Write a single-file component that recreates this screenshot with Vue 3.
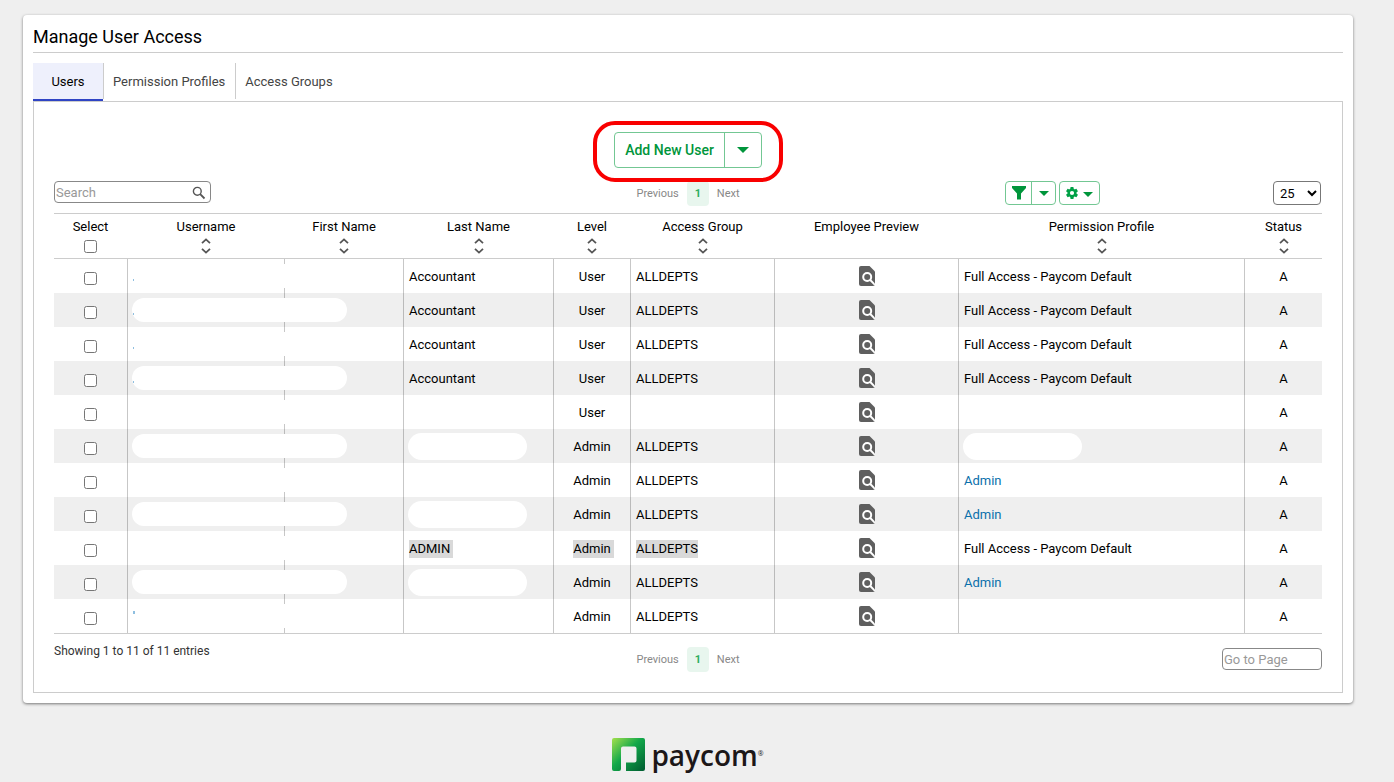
<script setup>
import { ref } from 'vue'

const search = ref('')
const goTo = ref('')
const pageSize = ref('25')

const tabs = [
  { label: 'Users', active: true },
  { label: 'Permission Profiles' },
  { label: 'Access Groups' },
]

const columns = [
  { label: 'Username', sortable: true },
  { label: 'First Name', sortable: true },
  { label: 'Last Name', sortable: true },
  { label: 'Level', sortable: true },
  { label: 'Access Group', sortable: true },
  { label: 'Employee Preview', sortable: false },
  { label: 'Permission Profile', sortable: true },
  { label: 'Status', sortable: true },
]

const full = 'Full Access - Paycom Default'
const rows = [
  { last: 'Accountant', level: 'User', group: 'ALLDEPTS', profile: full, speck: 'dot' },
  { last: 'Accountant', level: 'User', group: 'ALLDEPTS', profile: full, speck: 'dot' },
  { last: 'Accountant', level: 'User', group: 'ALLDEPTS', profile: full, speck: 'dot' },
  { last: 'Accountant', level: 'User', group: 'ALLDEPTS', profile: full, speck: 'dot' },
  { last: '', level: 'User', group: '', profile: '' },
  { last: '', level: 'Admin', group: 'ALLDEPTS', profile: '' },
  { last: '', level: 'Admin', group: 'ALLDEPTS', profile: 'Admin', link: true },
  { last: '', level: 'Admin', group: 'ALLDEPTS', profile: 'Admin', link: true },
  { last: 'ADMIN', level: 'Admin', group: 'ALLDEPTS', profile: full, marked: true },
  { last: '', level: 'Admin', group: 'ALLDEPTS', profile: 'Admin', link: true },
  { last: '', level: 'Admin', group: 'ALLDEPTS', profile: '', speck: 'tick' },
]
</script>

<template>
  <div class="page">
    <main class="card">
      <h1 class="title">Manage User Access</h1>

      <nav class="tabs">
        <button v-for="t in tabs" :key="t.label" type="button" class="tab" :class="{ active: t.active }">
          {{ t.label }}
        </button>
      </nav>

      <section class="panel">
        <div class="add">
          <div class="add-group">
            <button type="button" class="add-main">Add New User</button>
            <button type="button" class="add-more" aria-label="More add options">
              <svg width="12" height="6" viewBox="0 0 12 6"><path d="M0 0h12L6 6z" fill="#00953b" /></svg>
            </button>
            <span class="ring"></span>
          </div>
        </div>

        <div class="bar">
          <div class="search">
            <input v-model="search" type="text" placeholder="Search" aria-label="Search" />
            <svg width="14" height="14" viewBox="0 0 14 14" fill="none" stroke="#555">
              <circle cx="5.3" cy="5.3" r="3.9" stroke-width="1.4" />
              <path d="M8.2 8.2l4.3 4.3" stroke-width="1.8" />
            </svg>
          </div>
          <div class="pager">
            <button type="button">Previous</button>
            <button type="button" class="current">1</button>
            <button type="button">Next</button>
          </div>
          <div class="tools">
            <div class="tool-buttons">
              <div class="split">
                <button type="button" class="filter" aria-label="Filter">
                  <svg width="14" height="14" viewBox="0 0 14 14"><path d="M0 0h14v2L9 7.500V13.500H5V7.500L0 2z" fill="#00953b" /></svg>
                </button>
                <button type="button" class="filter-more" aria-label="Filter options">
                  <svg width="10" height="5" viewBox="0 0 10 5"><path d="M0 0h10L5 5z" fill="#00953b" /></svg>
                </button>
              </div>
              <button type="button" class="gear" aria-label="Settings">
                <svg width="12" height="12" viewBox="2 2 20 20"><path fill="#00a046" fill-rule="evenodd" d="M19.400 13a7.500 7.500 0 0 0 0-2l2.100-1.650a.5.5 0 0 0 .12-.64l-2-3.460a.5.5 0 0 0-.61-.22l-2.490 1a7.300 7.300 0 0 0-1.690-.98l-.38-2.650A.5.5 0 0 0 14 2h-4a.5.5 0 0 0-.49.42l-.38 2.650c-.61.25-1.170.59-1.690.98l-2.490-1a.5.5 0 0 0-.61.22l-2 3.460a.5.5 0 0 0 .12.64L4.570 11a7.900 7.900 0 0 0 0 2l-2.110 1.650a.5.5 0 0 0-.12.64l2 3.460c.12.22.39.3.61.22l2.490-1c.52.4 1.080.73 1.690.98l.38 2.650c.03.24.24.4.49.4h4c.25 0 .46-.18.49-.42l.38-2.650c.61-.25 1.170-.59 1.690-.98l2.490 1c.23.09.49 0 .61-.22l2-3.460a.5.5 0 0 0-.12-.64zM12 15.500a3.500 3.500 0 1 1 0-7 3.500 3.500 0 0 1 0 7z" /></svg>
                <svg class="low" width="10" height="5" viewBox="0 0 10 5"><path d="M0 0h10L5 5z" fill="#00953b" /></svg>
              </button>
            </div>
            <select v-model="pageSize" aria-label="Rows per page">
              <option>25</option>
              <option>50</option>
              <option>100</option>
            </select>
          </div>
        </div>

        <table>
          <colgroup>
            <col class="c-select" />
            <col class="c-username" />
            <col class="c-first" />
            <col class="c-last" />
            <col class="c-level" />
            <col class="c-group" />
            <col class="c-preview" />
            <col class="c-profile" />
            <col class="c-status" />
          </colgroup>
          <thead>
            <tr>
              <th scope="col">
                <div class="head">
                  <label for="all">Select</label>
                  <input id="all" type="checkbox" />
                </div>
              </th>
              <th v-for="c in columns" :key="c.label" scope="col">
                <div class="head">
                  <span>{{ c.label }}</span>
                  <svg v-if="c.sortable" width="10" height="16" viewBox="0 0 10 16" fill="none" stroke="#555" stroke-width="1.800">
                    <path d="M1 5.200L5 1.400l4 3.800M1 10.800l4 3.800 4-3.800" />
                  </svg>
                </div>
              </th>
            </tr>
          </thead>
          <tbody>
            <tr v-for="(r, i) in rows" :key="i">
              <td class="mid"><input type="checkbox" class="pick" :aria-label="'Select row ' + (i + 1)" /></td>
              <td><span class="mask wide" :class="r.speck"></span></td>
              <td></td>
              <td>
                <span v-if="r.last" :class="{ marked: r.marked, trail: r.marked }">{{ r.last }}</span>
                <span v-else class="mask"></span>
              </td>
              <td class="mid"><span :class="{ marked: r.marked, trail: r.marked }">{{ r.level }}</span></td>
              <td><span :class="{ marked: r.marked }">{{ r.group }}</span></td>
              <td class="mid">
                <button type="button" class="preview" aria-label="Preview employee">
                  <svg width="16" height="20" viewBox="0 0 16 20">
                    <path d="M2 0h8.500L16 5.500V18a2 2 0 0 1-2 2H2a2 2 0 0 1-2-2V2a2 2 0 0 1 2-2z" fill="#5f5f5f" />
                    <circle cx="8.200" cy="11" r="4" fill="none" stroke="#fff" stroke-width="2" />
                    <path d="M11 13.800l5 5" stroke="#fff" stroke-width="2" />
                  </svg>
                </button>
              </td>
              <td>
                <a v-if="r.link" href="#">{{ r.profile }}</a>
                <span v-else-if="r.profile">{{ r.profile }}</span>
                <span v-else class="mask"></span>
              </td>
              <td class="mid">A</td>
            </tr>
          </tbody>
        </table>

        <div class="bar foot">
          <p class="info">Showing 1 to 11 of 11 entries</p>
          <div class="pager">
            <button type="button">Previous</button>
            <button type="button" class="current">1</button>
            <button type="button">Next</button>
          </div>
          <input v-model="goTo" class="goto" type="text" placeholder="Go to Page" aria-label="Go to Page" />
        </div>
      </section>
    </main>

    <footer class="brand">
      <svg width="33" height="33" viewBox="0 0 33 33">
        <defs>
          <linearGradient id="leaf" x1="0" y1="0" x2="1" y2="1">
            <stop offset="0" stop-color="#a4e04c" />
            <stop offset="0.450" stop-color="#12a84a" />
            <stop offset="1" stop-color="#005a30" />
          </linearGradient>
        </defs>
        <path fill="url(#leaf)" d="M2 0h29a2 2 0 0 1 2 2v29a2 2 0 0 1-2 2H14V24.500h8.500a2 2 0 0 0 2-2V10.500a2 2 0 0 0-2-2H11a2 2 0 0 0-2 2V31a2 2 0 0 1-2 2H2a2 2 0 0 1-2-2V2a2 2 0 0 1 2-2z" />
      </svg>
      <span class="word">paycom</span><span class="reg">®</span>
    </footer>
  </div>
</template>

<style>
body {
  background: #efefef;
}
</style>

<style scoped>
.page {
  padding: 15px 41px 0 23px;
  font: 13px/20px Roboto, "Liberation Sans", sans-serif;
  color: #000;
}
.page * {
  box-sizing: border-box;
}
button,
input,
select {
  font: inherit;
  color: inherit;
  margin: 0;
}
button {
  background: none;
  border: 0;
  padding: 0;
  display: flex;
  align-items: center;
  justify-content: center;
}
.card {
  background: #fff;
  border-radius: 4px;
  padding: 0 10px 10px;
  box-shadow: 0 1px 3px rgba(0, 0, 0, 0.5);
}
.title {
  margin: 0;
  height: 38px;
  padding-top: 11px;
  border-bottom: 1px solid #ccc;
  font-size: 18px;
  line-height: 22px;
  font-weight: 400;
}
.tabs {
  display: flex;
  margin-top: 10px;
  height: 38px;
}
.tab {
  height: 36px;
  padding: 2px 10px 0;
  font-size: 13px;
  color: #444;
}
.tab + .tab {
  padding-left: 9px;
  border-left: 1px solid #ccc;
}
.tab.active {
  height: 38px;
  width: 70px;
  background: #eef0fc;
  border-bottom: 2px solid #2f44c4;
  color: #000;
}
.panel {
  border: 1px solid #ccc;
  padding: 30px 20px 20px;
}
.add {
  display: flex;
  justify-content: center;
}
.add-group {
  position: relative;
  display: flex;
  height: 36px;
  border: 1px solid #73c793;
  border-radius: 4px;
}
.add-main {
  padding: 0 10px;
  font-size: 14px;
  font-weight: 500;
  color: #00953b;
}
.add-more {
  width: 37px;
  border-left: 1px solid #73c793;
}
.ring {
  position: absolute;
  inset: -12px -22px -15px;
  border: 4px solid #f90000;
  border-radius: 22px;
  pointer-events: none;
}
.bar {
  display: grid;
  grid-template-columns: 1fr auto 1fr;
  margin-top: 13px;
  height: 32px;
  align-items: start;
}
.search {
  display: flex;
  align-items: center;
  width: 157px;
  height: 22px;
  padding-right: 4px;
  border: 1px solid #888;
  border-radius: 4px;
}
.search input {
  flex: 1;
  min-width: 0;
  height: 20px;
  padding: 2px 1px 0;
  border: 0;
  background: none;
}
.search svg {
  margin-top: 2px;
}
::placeholder {
  color: #999;
  opacity: 1;
}
.pager {
  display: flex;
  gap: 8px;
  font-size: 11px;
  color: #888;
}
.pager .current {
  width: 22px;
  height: 25px;
  border-radius: 4px;
  background: #e8f6ee;
  color: #2fae60;
  font-weight: 700;
}
.tools {
  display: flex;
  justify-content: flex-end;
  gap: 173px;
  padding-right: 1px;
}
.tool-buttons {
  display: flex;
  gap: 3px;
}
.split,
.gear {
  display: flex;
  height: 24px;
  border: 1px solid #73c793;
  border-radius: 4px;
}
.filter {
  width: 25px;
}
.filter-more {
  width: 24px;
  border-left: 1px solid #73c793;
}
.gear {
  width: 41px;
  gap: 5px;
}
.low {
  margin-top: 2px;
}
select {
  width: 48px;
  height: 24px;
  padding: 0 2px;
  border: 1px solid #777;
  border-radius: 4px;
  background: #fff;
}
table {
  width: 100%;
  table-layout: fixed;
  border-collapse: separate;
  border-spacing: 0;
  border-bottom: 1px solid #ccc;
}
.c-select { width: 73px; }
.c-username { width: 157px; }
.c-first { width: 119px; }
.c-last { width: 150px; }
.c-level { width: 77px; }
.c-group { width: 144px; }
.c-preview { width: 184px; }
.c-profile { width: 286px; }
.c-status { width: 78px; }
th {
  height: 46px;
  padding: 0;
  border-top: 1px solid #ccc;
  border-bottom: 1px solid #ccc;
  font-weight: 400;
  vertical-align: top;
}
th + th {
  padding-left: 1px;
}
.head {
  display: flex;
  flex-direction: column;
  align-items: center;
  padding-top: 3px;
}
.head svg {
  margin-top: 1px;
}
.head input {
  margin-top: 3px;
}
td {
  position: relative;
  height: 34px;
  padding: 2px 5px 0;
  white-space: nowrap;
}
td + td {
  border-left: 1px solid rgba(0, 0, 0, 0.22);
}
tbody tr:nth-child(even) {
  background: #efefef;
}
.mid {
  text-align: center;
}
.pick {
  display: block;
  margin: 3px auto 0;
}
.mask {
  position: absolute;
  z-index: 1;
  left: 4px;
  top: 4px;
  width: 119px;
  height: 27px;
  border-radius: 14px;
  background: #fff;
}
.mask.wide {
  top: 5px;
  width: 215px;
  height: 24px;
}
.dot::after,
.tick::after {
  content: "";
  position: absolute;
  left: 1px;
  top: 15px;
  width: 1px;
  height: 2px;
  background: #8fbfe0;
}
.tick::after {
  top: 7px;
  width: 2px;
  height: 3px;
}
.marked {
  padding: 1px 0 2px;
  background: #d9d9d9;
}
.trail {
  padding-right: 3px;
  margin-right: -3px;
}
.preview {
  margin: 0 auto 2px;
}
a {
  color: #0a6fab;
  text-decoration: none;
}
.foot {
  height: 25px;
}
.info {
  margin: 0;
  font-size: 12px;
  line-height: 8px;
  color: #333;
}
.goto {
  justify-self: end;
  width: 100px;
  height: 22px;
  margin-top: 1px;
  padding: 1px 1px 0;
  border: 1px solid #888;
  border-radius: 4px;
}
.brand {
  display: flex;
  justify-content: center;
  margin-top: 35px;
  color: #1c1718;
  font-family: "Open Sans", sans-serif;
}
.word {
  margin-left: 6px;
  font-size: 28px;
  line-height: 35px;
  font-weight: 600;
}
.reg {
  font-size: 7px;
  line-height: 31px;
}
</style>
